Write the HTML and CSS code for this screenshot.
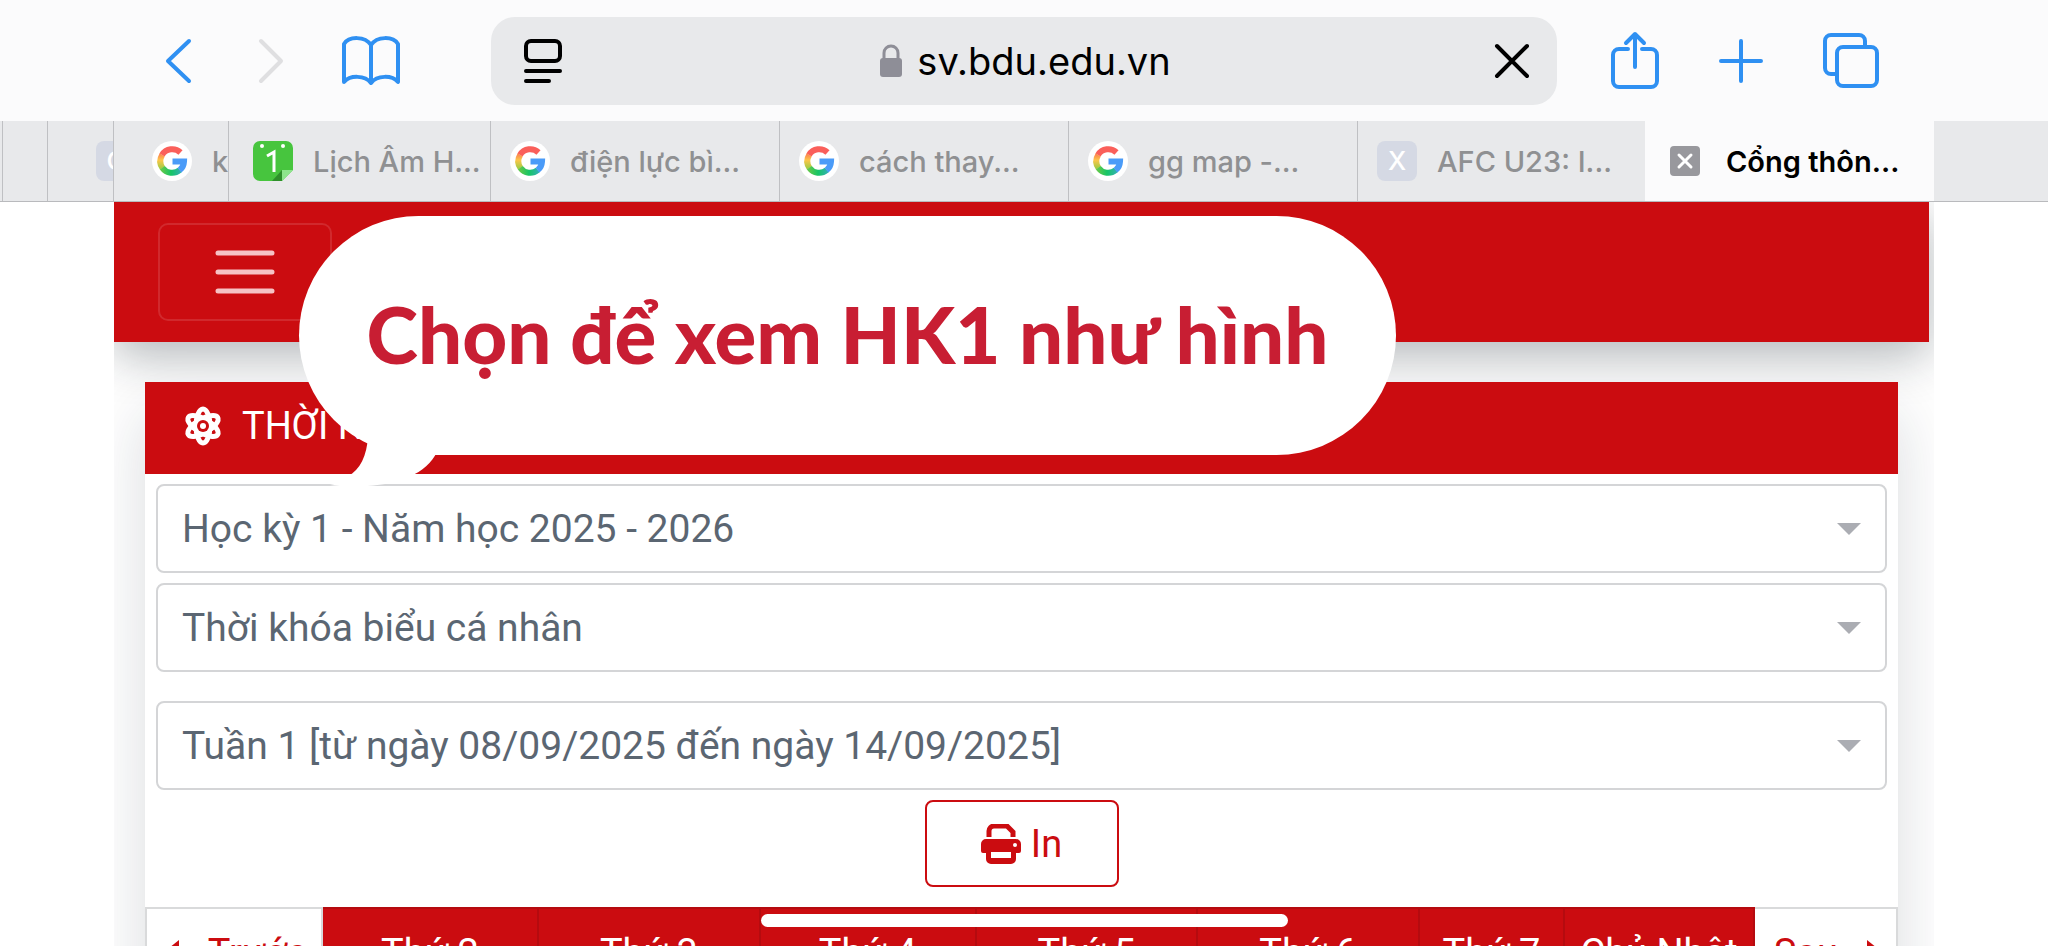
FILE: index.html
```
<!DOCTYPE html>
<html lang="vi">
<head>
<meta charset="utf-8">
<meta name="viewport" content="width=device-width, initial-scale=1">
<title>Cổng thông tin</title>
<link rel="stylesheet" href="styles.css">
</head>
<body>

<svg class="defs" aria-hidden="true">
  <defs>
    <linearGradient id="g-left" x1="0" y1="0" x2="0" y2="1">
      <stop offset="0" stop-color="#fb8a50"/>
      <stop offset=".4" stop-color="#fdc64a"/>
      <stop offset="1" stop-color="#a5cb45"/>
    </linearGradient>
    <linearGradient id="g-bottom" x1="0" y1="0" x2="1" y2="0">
      <stop offset="0" stop-color="#5cc84c"/>
      <stop offset=".5" stop-color="#16c566"/>
      <stop offset="1" stop-color="#2fb3a8"/>
    </linearGradient>
    <symbol id="google" viewBox="0 0 40 40">
      <circle cx="20" cy="20" r="20" fill="#fff"/>
      <g fill="none" stroke-width="6">
        <path d="M10 14A12 12 0 0 1 28.500 11.500" stroke="#fa5f5a"/>
        <path d="M10.500 27A12 12 0 0 1 10.200 13.800" stroke="url(#g-left)"/>
        <path d="M27.800 29A12 12 0 0 1 10.300 26.700" stroke="url(#g-bottom)"/>
        <path d="M20.500 20.500H32A12 12 0 0 1 27.600 29.200" stroke="#4a9bf8"/>
      </g>
    </symbol>
  </defs>
</svg>

<header class="browser">
  <div class="toolbar">
    <button class="tool back" type="button" aria-label="Quay lại">
      <svg width="30" height="48" viewBox="0 0 30 48"><path d="M25 4 4 24l21 20"/></svg>
    </button>
    <button class="tool forward" type="button" aria-label="Tiến" disabled>
      <svg width="30" height="48" viewBox="0 0 30 48"><path d="M5 4l20 20L5 44"/></svg>
    </button>
    <button class="tool book" type="button" aria-label="Dấu trang">
      <svg width="60" height="52" viewBox="0 0 60 52"><path d="M30 10C24 1 8 1 3 9v38c6-7 21-7 27 1 6-8 21-8 27-1V9C52 1 36 1 30 10v38"/></svg>
    </button>
    <div class="address">
      <button class="reader" type="button" aria-label="Trình đọc">
        <svg width="40" height="48" viewBox="0 0 40 48"><rect x="4" y="4" width="34" height="20" rx="5"/><path d="M4 34h34M4 44h23"/></svg>
      </button>
      <div class="host">
        <svg width="24" height="34" viewBox="0 0 24 34"><path d="M5 15V9a7 7 0 0 1 14 0v6" fill="none" stroke="#8e8e97" stroke-width="3"/><rect x="1" y="14" width="22" height="19" rx="3" fill="#8e8e97"/></svg>
        <span>sv.bdu.edu.vn</span>
      </div>
      <button class="stop" type="button" aria-label="Dừng">
        <svg width="36" height="36" viewBox="0 0 36 36"><path d="M3 3l30 30M33 3 3 33"/></svg>
      </button>
    </div>
    <button class="tool share" type="button" aria-label="Chia sẻ">
      <svg width="50" height="60" viewBox="0 0 50 60"><path d="M18 18H9a6 6 0 0 0-6 6v26a6 6 0 0 0 6 6h32a6 6 0 0 0 6-6V24a6 6 0 0 0-6-6h-9M25 36V3M16 12l9-9 9 9"/></svg>
    </button>
    <button class="tool plus" type="button" aria-label="Thẻ mới">
      <svg width="46" height="46" viewBox="0 0 46 46"><path d="M23 3v40M3 23h40"/></svg>
    </button>
    <button class="tool windows" type="button" aria-label="Các thẻ">
      <svg width="58" height="58" viewBox="0 0 58 58"><path d="M15 42h-6a6 6 0 0 1-6-6V9a6 6 0 0 1 6-6h28a6 6 0 0 1 6 6v5"/><rect x="15" y="15" width="40" height="39" rx="6"/></svg>
    </button>
  </div>

  <nav class="tabs">
    <a class="tab stub" href="#"></a>
    <a class="tab stub" href="#"></a>
    <a class="tab hidden-tab" href="#"><span class="letter">C</span></a>
    <a class="tab" href="#"><svg class="fav"><use href="#google"/></svg><span>k</span></a>
    <a class="tab lunar" href="#">
      <svg class="fav" viewBox="0 0 40 40"><path d="M7 0h26a7 7 0 0 1 7 7v22L29 40H7a7 7 0 0 1-7-7V7a7 7 0 0 1 7-7z" fill="#47c53e"/><path d="M40 29 29 40V29z" fill="#8ee58c"/><path d="M29 29v11H19z" fill="#2f8f2b"/><circle cx="9" cy="5" r="2" fill="#fff"/><circle cx="30" cy="5" r="2" fill="#fff"/><path d="M14 15l7-4v20" fill="none" stroke="#fff" stroke-width="3"/></svg>
      <span>Lịch Âm H...</span>
    </a>
    <a class="tab" href="#"><svg class="fav"><use href="#google"/></svg><span>điện lực bì...</span></a>
    <a class="tab" href="#"><svg class="fav"><use href="#google"/></svg><span>cách thay...</span></a>
    <a class="tab" href="#"><svg class="fav"><use href="#google"/></svg><span>gg map -...</span></a>
    <a class="tab" href="#"><span class="letter">X</span><span>AFC U23: I...</span></a>
    <a class="tab active" href="#">
      <svg class="close" viewBox="0 0 30 30"><rect width="30" height="30" rx="4" fill="#98989d"/><path d="M9 9l12 12M21 9 9 21" stroke="#fff" stroke-width="3" stroke-linecap="round"/></svg>
      <span>Cổng thôn...</span>
    </a>
    <span class="rest"></span>
  </nav>
</header>

<main class="page">
  <div class="navbar">
    <button class="menu" type="button" aria-label="Menu">
      <svg width="60" height="48" viewBox="0 0 60 48"><path d="M3 5h54M3 24h54M3 43h54"/></svg>
    </button>
  </div>

  <section class="card">
    <h1 class="card-title">
      <svg width="40" height="40" viewBox="0 0 40 40"><g fill="none" stroke="#fff" stroke-width="5"><ellipse cx="20" cy="20" rx="7" ry="17"/><ellipse cx="20" cy="20" rx="7" ry="17" transform="rotate(60 20 20)"/><ellipse cx="20" cy="20" rx="7" ry="17" transform="rotate(120 20 20)"/></g><circle cx="20" cy="20" r="6" fill="#cb0c10"/><circle cx="20" cy="20" r="3" fill="#fff"/></svg>
      <span>THỜI KHÓA BIỂU</span>
    </h1>
    <form class="filters">
      <div class="field">
        <select aria-label="Học kỳ"><option>Học kỳ 1 - Năm học 2025 - 2026</option></select>
      </div>
      <div class="field">
        <select aria-label="Loại thời khóa biểu"><option>Thời khóa biểu cá nhân</option></select>
      </div>
      <div class="field week">
        <select aria-label="Tuần"><option>Tuần 1 [từ ngày 08/09/2025 đến ngày 14/09/2025]</option></select>
      </div>
      <button class="print" type="button">
        <svg width="40" height="40" viewBox="0 0 40 40"><path d="M8 13V7a5 5 0 0 1 5-5h13l6 6v5" fill="none" stroke="#cb0c10" stroke-width="5"/><path d="M5 15h30a5 5 0 0 1 5 5v7a2 2 0 0 1-2 2h-3v6a5 5 0 0 1-5 5H10a5 5 0 0 1-5-5v-6H2a2 2 0 0 1-2-2v-7a5 5 0 0 1 5-5z" fill="#cb0c10"/><path d="M10 28h20v6H10z" fill="#fff"/><circle cx="34" cy="21" r="2" fill="#fff"/></svg>
        <span>In</span>
      </button>
    </form>
    <table class="week-table">
      <colgroup>
        <col class="w-prev"><col class="w-mon"><col><col class="w-mon"><col><col><col class="w-sat"><col class="w-sun"><col class="w-next">
      </colgroup>
      <tr>
        <td class="step"><a href="#"><svg width="30" height="24" viewBox="0 0 30 24"><path d="M30 12H6" fill="none" stroke="#cb0c10" stroke-width="4"/><path d="M10 4v16L0 12z" fill="#cb0c10"/></svg> Trước</a></td>
        <th>Thứ 2</th>
        <th>Thứ 3</th>
        <th>Thứ 4</th>
        <th>Thứ 5</th>
        <th>Thứ 6</th>
        <th>Thứ 7</th>
        <th>Chủ Nhật</th>
        <td class="step"><a href="#">Sau <svg width="30" height="24" viewBox="0 0 30 24"><path d="M0 12h24" fill="none" stroke="#cb0c10" stroke-width="4"/><path d="M20 4v16l10-8z" fill="#cb0c10"/></svg></a></td>
      </tr>
    </table>
  </section>
</main>

<div class="bubble">
  <svg class="tail" width="110" height="50" viewBox="0 0 110 50"><path d="M38 0C37 20 30 34 18 40 12 46 6 48 0 49 22 52 60 51 80 40 92 36 102 26 107 16V0z" fill="#fff"/></svg>
  <p>Chọn để xem HK1 như hình</p>
</div>
<div class="home-bar"></div>

</body>
</html>
```
FILE: styles.css
```
* {
    box-sizing: border-box;
}
body {
    margin: 0;
    height: 100vh;
    overflow: hidden;
    position: relative;
    background: #fff;
    font-family: Roboto, sans-serif;
    font-size: 38px;
}
button {
    font: inherit;
    padding: 0;
    border: 0;
    background: none;
}
a {
    text-decoration: none;
}
svg {
    display: block;
    flex: none;
}
.defs {
    position: absolute;
    width: 0;
    height: 0;
}

/* browser bar */
.browser {
    font-family: Inter, sans-serif;
    background: #fbfbfc;
}
.toolbar {
    display: flex;
    align-items: center;
    height: 121px;
    padding: 0 168px 0 164px;
}
.tool svg {
    fill: none;
    stroke: #2f90f2;
    stroke-width: 4;
    stroke-linecap: round;
    stroke-linejoin: round;
}
.forward {
    margin-left: 62px;
}
.forward svg {
    stroke: #dfdfe1;
}
.book {
    margin-left: 55px;
}
.address {
    flex: 1;
    display: flex;
    align-items: center;
    justify-content: space-between;
    height: 88px;
    margin: 0 53px 0 90px;
    padding: 0 27px 0 31px;
    border-radius: 24px;
    background: #e8e9eb;
}
.reader svg,
.stop svg {
    fill: none;
    stroke: #000;
    stroke-width: 4;
    stroke-linecap: round;
}
.host {
    display: flex;
    align-items: center;
    gap: 14px;
    margin-right: 6px;
    font-size: 38px;
}
.plus {
    margin-left: 58px;
}
.windows {
    margin-left: 58px;
}

.tabs {
    display: grid;
    grid-template-columns: 3fr 45fr 66fr 115fr 262fr 289fr 289fr 289fr 287fr 289fr 114fr;
    height: 81px;
    border-bottom: 1px solid #b9babd;
    background: #e8e9eb;
}
.tab {
    display: flex;
    align-items: center;
    gap: 20px;
    min-width: 0;
    overflow: hidden;
    padding-left: 19px;
    border-right: 1px solid #bfc0c3;
    color: #8f9092;
    font-size: 29px;
    font-weight: 500;
    white-space: nowrap;
}
.stub {
    padding: 0;
}
.tab:nth-child(4) {
    padding-left: 38px;
}
.lunar {
    padding-left: 24px;
}
.hidden-tab {
    padding-left: 48px;
}
.fav {
    width: 40px;
    height: 40px;
}
.letter {
    flex: none;
    width: 40px;
    height: 40px;
    border-radius: 8px;
    background: #d5d9e4;
    color: #fff;
    font-size: 26px;
    line-height: 40px;
    text-align: center;
}
.tab:nth-child(9) {
    border-right: 0;
}
.tab.active {
    gap: 26px;
    padding-left: 25px;
    border: 0;
    background: #fbfbfc;
    color: #000;
    font-weight: 600;
}
.close {
    width: 30px;
    height: 30px;
}

/* web page */
.page {
    margin: 0 114px;
    padding-right: 5px;
    overflow: hidden;
}
.navbar {
    display: flex;
    align-items: center;
    height: 140px;
    padding: 0 44px;
    background: #cb0c10;
    box-shadow: 0 14px 44px rgba(20, 30, 40, .32);
}
.menu {
    display: flex;
    align-items: center;
    justify-content: center;
    width: 174px;
    height: 98px;
    border: 2px solid rgba(255, 255, 255, .12);
    border-radius: 10px;
}
.menu svg {
    fill: none;
    stroke: #f6c3c5;
    stroke-width: 5;
    stroke-linecap: round;
}
.card {
    margin: 40px 31px 0;
    background: #fff;
    box-shadow: 0 30px 60px rgba(20, 30, 50, .16);
}
.card-title {
    display: flex;
    align-items: center;
    gap: 19px;
    height: 92px;
    margin: 0;
    padding: 0 38px 4px;
    background: #cb0c10;
    color: #fff;
    font-size: 38px;
    font-weight: 400;
}
.filters {
    padding: 10px 11px 20px;
}
.field {
    position: relative;
    margin-bottom: 10px;
}
.field::after {
    content: "";
    position: absolute;
    top: 39px;
    right: 26px;
    border: 12px solid transparent;
    border-top-color: #abadb3;
    border-bottom: 0;
}
.week {
    margin-top: 29px;
}
.field select {
    display: block;
    width: 100%;
    height: 89px;
    padding: 0 60px 0 24px;
    appearance: none;
    border: 2px solid #d4d5d7;
    border-radius: 8px;
    background: #fff;
    color: #5b6672;
    font: inherit;
    font-size: 39px;
}
.print {
    display: flex;
    align-items: center;
    justify-content: center;
    gap: 10px;
    width: 194px;
    height: 87px;
    margin: 0 auto;
    border: 2px solid #cb0c10;
    border-radius: 8px;
    color: #cb0c10;
}
.week-table {
    width: 100%;
    table-layout: fixed;
    border-collapse: collapse;
    line-height: 44px;
}
.week-table th,
.week-table td {
    padding: 22px 0;
    border: 2px solid #d9dadb;
    font-weight: 400;
    text-align: center;
    white-space: nowrap;
}
.week-table th {
    border-color: #b50b0f;
    background: #cb0c10;
    color: #fff;
}
.step a {
    color: #cb0c10;
}
.step svg {
    display: inline-block;
    vertical-align: 6px;
}
.week-table .step:first-child {
    padding-left: 8px;
}
.w-prev {
    width: 176px;
}
.w-mon {
    width: 216px;
}
.w-sat {
    width: 145px;
}
.w-sun {
    width: 190px;
}
.w-next {
    width: 143px;
}

/* note laid over the page */
.bubble {
    position: absolute;
    top: 216px;
    left: 299px;
    width: 1097px;
    height: 239px;
    border-radius: 120px;
    background: #fff;
}
.bubble p {
    margin: 0;
    color: #c81e33;
    font-family: Lato, sans-serif;
    font-size: 78px;
    font-weight: 900;
    line-height: 236px;
    text-align: center;
    white-space: nowrap;
}
.tail {
    position: absolute;
    top: 220px;
    left: 31px;
}
.home-bar {
    position: absolute;
    bottom: 19px;
    left: 761px;
    width: 527px;
    height: 13px;
    border-radius: 7px;
    background: #fff;
}
```
